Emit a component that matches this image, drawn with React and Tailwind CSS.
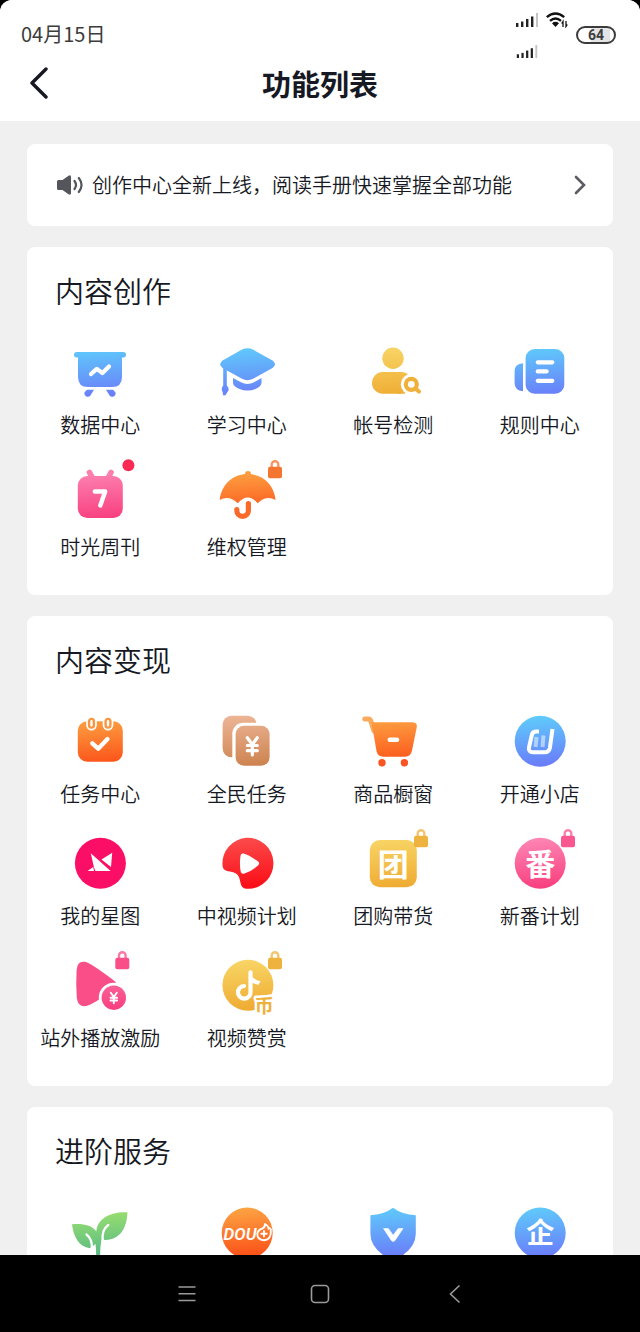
import React from "react";

const CJK = "font-['Noto_Sans_CJK_SC',sans-serif]";

const PALETTES = {
  blue: ["#5fcbfb", "#6a7cf9"],
  yellow: ["#f8d566", "#efab32"],
  pink: ["#fd86b4", "#f83f7f"],
  orange: ["#fda544", "#fb4f17"],
  tan: ["#ecb494", "#cd8350"],
  red: ["#fb4b4b", "#fb0d17"],
  green: ["#a0e36c", "#56b886"],
};

function Lock({ x = 60, fill }) {
  return (
    <g>
      <path
        d={`M${x - 3.3} 7 V2.5 a3.3 3.3 0 0 1 6.6 0 V7`}
        fill="none"
        stroke={fill}
        strokeWidth="2.4"
        opacity="0.75"
      />
      <rect x={x - 7} y="4.8" width="14" height="11.4" rx="2" fill={fill} />
    </g>
  );
}

function Glyph({ x, y, size, children, ...rest }) {
  return (
    <text
      x={x}
      y={y}
      fontSize={size}
      fontWeight="700"
      textAnchor="middle"
      fill="#fff"
      className={CJK}
      {...rest}
    >
      {children}
    </text>
  );
}

function Icon({ id, tone, children }) {
  const [from, to] = PALETTES[tone];
  return (
    <svg viewBox="0 0 64 64" className="block size-16 overflow-visible" aria-hidden="true">
      <defs>
        <linearGradient id={id} gradientUnits="userSpaceOnUse" x1="30" y1="7" x2="34" y2="57">
          <stop offset="0" stopColor={from} />
          <stop offset="1" stopColor={to} />
        </linearGradient>
      </defs>
      {children(`url(#${id})`)}
    </svg>
  );
}

const line = { fill: "none", strokeLinecap: "round", strokeLinejoin: "round" };

const DataIcon = () => (
  <Icon id="g-data" tone="blue">
    {(f) => (
      <>
        <rect x="6" y="12" width="52" height="5.4" rx="2.7" fill={f} />
        <path d="M10 13H54V37Q54 47 44 47H20Q10 47 10 37Z" fill={f} />
        <path d="M19 49.7H26L22.6 55.2Q20.8 57.6 18 56.2Q15.4 54.5 16.8 52Z" fill={f} />
        <path d="M45 49.7H38L41.4 55.2Q43.2 57.6 46 56.2Q48.6 54.5 47.2 52Z" fill={f} />
        <path d="M23 34L28.8 28.9L34.4 33L41 26.5" stroke="#fff" strokeWidth="4.2" {...line} />
      </>
    )}
  </Icon>
);

const StudyIcon = () => (
  <Icon id="g-study" tone="blue">
    {(f) => (
      <>
        <path d="M27 9.6Q32.5 7 38 9.6L57.5 20.5Q62.5 24.3 57.5 28L38 38.8Q32.5 41.5 27 38.8L7.5 28Q3 24.3 7.5 20.5Z" fill={f} />
        <path d="M18 38L26 42.3Q32.5 45.5 39 42.3L46.500 38V43Q46 46.5 41 48.7Q32.5 52.5 24 48.7Q18.5 46.5 18 43Z" fill={f} />
        <path d="M8.2 27H11.8V45.5Q15.2 49 12.500 52L11.5 53.5Q11 55.5 9 55.5Q7.5 55 7.8 52.5Q5.5 48.5 8.2 45.5Z" fill={f} />
      </>
    )}
  </Icon>
);

const AccountIcon = () => (
  <Icon id="g-account" tone="yellow">
    {(f) => (
      <>
        <circle cx="32" cy="18.3" r="10.7" fill={f} />
        <rect x="11" y="32" width="40" height="21.7" rx="10.8" fill={f} />
        <path d="M40 48H58V56H40Z" fill="#fff" />
        <path d="M36 44H44V53.7H36Z" fill={f} />
        <circle cx="50.3" cy="44.3" r="10.5" fill="#fff" />
        <circle cx="50.3" cy="44.3" r="5.5" fill="none" stroke="#f0b13b" strokeWidth="4.2" />
        <path d="M55 49L58 51.6" stroke="#f0b13b" strokeWidth="4" {...line} />
      </>
    )}
  </Icon>
);

const RulesIcon = () => (
  <Icon id="g-rules" tone="blue">
    {(f) => (
      <>
        <rect x="17.6" y="9" width="38.7" height="44.7" rx="9" fill={f} />
        <path d="M15 23.3V51.3Q6.6 50.5 6.6 43V31Q6.6 24 15 23.3Z" fill={f} />
        <path d="M29.8 22.3H44.3M29.8 31.4H38.6M29.8 40.8H44.3" stroke="#fff" strokeWidth="4.3" {...line} />
      </>
    )}
  </Icon>
);

const WeeklyIcon = () => (
  <Icon id="g-weekly" tone="pink">
    {(f) => (
      <>
        <path d="M21.5 10.5L24.5 16M43 10.500L40 16" stroke="#fc7fae" strokeWidth="5.6" {...line} />
        <rect x="9.8" y="14" width="45" height="42" rx="9.5" fill={f} />
        <path d="M26.8 29.5H37.200L32.3 43.5" stroke="#fff" strokeWidth="4.400" {...line} />
        <circle cx="60.4" cy="3.3" r="6" fill="#fa2a55" />
      </>
    )}
  </Icon>
);

const RightsIcon = () => (
  <Icon id="g-rights" tone="orange">
    {(f) => (
      <>
        <circle cx="33" cy="12" r="3" fill={f} />
        <path d="M4.700 38C6.5 22 18 12 32.700 12S59 22 60.600 38Q51.500 32.500 42.6 41.3Q32.7 29.5 22.8 41.3Q13.8 32.500 4.700 38Z" fill={f} />
        <path d="M33.4 40.500V48.500A5.800 5.800 0 0 1 21.800 48.500V47.500" stroke="#fff" strokeWidth="8.400" {...line} />
        <path d="M33.4 41.500V48.500A5.800 5.800 0 0 1 21.800 48.500V47.500" stroke="#f96a2b" strokeWidth="5.200" {...line} />
        <Lock fill="#f4752f" />
      </>
    )}
  </Icon>
);

const TaskIcon = () => (
  <Icon id="g-task" tone="orange">
    {(f) => (
      <>
        <rect x="9.8" y="12.3" width="45" height="40.4" rx="9.5" fill={f} />
        {[23.5, 40].map((x) => (
          <g key={x}>
            <rect x={x - 5.3} y="7" width="10.6" height="14.5" rx="5.3" fill="#fff" />
            <rect x={x - 2.4} y="9.900" width="4.800" height="8.700" rx="2.400" fill="#fff" stroke="#fb9540" strokeWidth="2.400" />
          </g>
        ))}
        <path d="M24.3 34.3L30.2 39.7L39.5 30" stroke="#fff" strokeWidth="4.3" {...line} />
      </>
    )}
  </Icon>
);

const PublicTaskIcon = () => (
  <Icon id="g-public" tone="tan">
    {(f) => (
      <>
        <rect x="7.6" y="6.7" width="34" height="41.6" rx="9" fill={f} />
        <rect x="17.3" y="13.7" width="40" height="46" rx="11" fill="#fff" />
        <rect x="20.6" y="16.7" width="34" height="40" rx="8.5" fill={f} />
        <path d="M32.3 28.8L37.3 35.5L42.3 28.8M37.3 35.5V46M32.3 36.5H42.3M32.3 41.7H42.3" stroke="#fff" strokeWidth="3.200" {...line} />
      </>
    )}
  </Icon>
);

const CartIcon = () => (
  <Icon id="g-cart" tone="orange">
    {(f) => (
      <>
        <path d="M3.800 10H7.500Q9.3 10 10 12.5L13 22" stroke="#fbab5e" strokeWidth="5" {...line} />
        <path d="M10.500 13.3H51.500Q56.500 13.6 55.800 18L51 41.5Q49.700 47.7 44 47.700H22.500Q17 47.700 15.600 42.5Z" fill={f} />
        <rect x="26.600" y="28.400" width="11.600" height="4.500" rx="2" fill="#fff" />
        <circle cx="21" cy="53.700" r="3.700" fill="#fb5423" />
        <circle cx="43.400" cy="53.700" r="3.700" fill="#fb5423" />
      </>
    )}
  </Icon>
);

const ShopIcon = () => (
  <Icon id="g-shop" tone="blue">
    {(f) => (
      <>
        <circle cx="32.2" cy="32.3" r="25.5" fill={f} />
        <path d="M28.5 28L27.600 38M35.500 26.500L34.500 38" stroke="#fff" strokeWidth="4" opacity="0.5" fill="none" />
        <path d="M31 22.500H28.300Q24.500 22.500 23.800 26L21 38.500Q20.200 43.200 25 43.200H36.500Q41 43.200 41.900 38.800L44.500 20" stroke="#fff" strokeWidth="4" fill="none" strokeLinejoin="round" />
      </>
    )}
  </Icon>
);

const StarIcon = () => (
  <Icon id="g-star" tone="pink">
    {() => (
      <>
        <circle cx="32.4" cy="32.3" r="25.5" fill="#fb0f66" />
        <path d="M22.8 22.3L42.6 40H27.4L26 36.500ZM44.2 21.700L43 36L33.500 28.600ZM25.200 36L19.600 40H26Z" fill="#fff" />
      </>
    )}
  </Icon>
);

const MidVideoIcon = () => (
  <Icon id="g-mid" tone="red">
    {(f) => (
      <>
        <path d="M7.5 34A25.5 25.5 0 1 1 34 57.8C28.5 58 26.3 56.5 25.3 51C24.3 45 22.5 42 17 41C11 40 7.5 39 7.5 34Z" fill={f} />
        <path d="M28 25Q33 26.5 41.500 32.400Q35 38.500 28.200 40.200Q26.800 33 28 25Z" fill="#fff" stroke="#fff" strokeWidth="5" strokeLinejoin="round" />
      </>
    )}
  </Icon>
);

const GroupBuyIcon = () => (
  <Icon id="g-group" tone="yellow">
    {(f) => (
      <>
        <rect x="8.8" y="9" width="47" height="47.3" rx="10" fill={f} />
        <Glyph x="32.3" y="44.5" size="31">团</Glyph>
        <Lock fill="#eeb33f" />
      </>
    )}
  </Icon>
);

const NewShowIcon = () => (
  <Icon id="g-new" tone="pink">
    {(f) => (
      <>
        <circle cx="32.2" cy="32.3" r="25.5" fill={f} />
        <Glyph x="32.2" y="44" size="30">番</Glyph>
        <Lock fill="#fa5790" />
      </>
    )}
  </Icon>
);

const OffsiteIcon = () => (
  <Icon id="g-offsite" tone="pink">
    {(f) => (
      <>
        <path d="M8.6 17Q9.3 7.5 17 8.8Q22 9.5 46.5 28Q50 31 46 35Q26 52 16.5 53.3Q10 53.5 8.8 45Q7.8 31 8.6 17Z" fill="#f94e87" />
        <circle cx="45.8" cy="44.7" r="15" fill="#fff" />
        <circle cx="45.8" cy="44.7" r="12.2" fill={f} />
        <path d="M42.800 39.800L45.8 44L48.800 39.800M45.8 44V50.300M42.500 44.700H49.100M42.500 47.500H49.100" stroke="#fff" strokeWidth="1.900" {...line} />
        <Lock x={54.3} fill="#f94e87" />
      </>
    )}
  </Icon>
);

const RewardIcon = () => (
  <Icon id="g-reward" tone="yellow">
    {(f) => (
      <>
        <circle cx="32.9" cy="32.3" r="25.5" fill={f} />
        <path d="M35.5 19.3V38.500A6.300 6.300 0 1 1 29 33" stroke="#fff" strokeWidth="4.200" fill="none" strokeLinecap="round" />
        <path d="M34 19.500Q37.500 26.500 45.500 28.300L43.500 31.800Q38 31 35 28Z" fill="#fff" />
        <Glyph x="49.2" y="60" size="19" fill="#edb13c" stroke="#fff" strokeWidth="5" strokeLinejoin="round" paintOrder="stroke">币</Glyph>
        <Lock fill="#eeb33f" />
      </>
    )}
  </Icon>
);

const SproutIcon = () => (
  <Icon id="g-sprout" tone="green">
    {(f) => (
      <>
        <path d="M59.400 12.300C43 11.500 29.500 18 28.300 31.500C24 25 15 23.500 4 24.300C5.500 37 11 47 22 48.300L27.500 44Q28.500 52 28 62H32.300Q31.600 48 33.500 39.500L37.500 40C53 39.500 59 27 59.400 12.300Z" fill={f} />
        <path d="M40.300 25C35.500 28.500 33.800 34 34.800 41M18.500 34.500C22.500 37.500 24.500 42 23.800 49.500" stroke="#fff" strokeWidth="2.300" {...line} />
      </>
    )}
  </Icon>
);

const DouIcon = () => (
  <Icon id="g-dou" tone="orange">
    {(f) => (
      <>
        <circle cx="32.2" cy="33" r="25.5" fill={f} />
        <text x="25" y="39.5" fontSize="17" fontWeight="600" fontStyle="italic" textAnchor="middle" fill="#fff" className="font-['Roboto',sans-serif]">DOU</text>
        <path d="M50 24Q54 26.5 53.5 28.800Q55.500 27.500 55.800 29.5Q56.800 39.700 49 40.200Q42 39.700 42.3 33.5Q43.500 29.5 47.5 28.5Q50 27.500 50 24Z" stroke="#fff" strokeWidth="1.9" {...line} />
        <path d="M49 31V36.400M46.300 33.700H51.700" stroke="#fff" strokeWidth="1.900" {...line} />
      </>
    )}
  </Icon>
);

const ShieldIcon = () => (
  <Icon id="g-shield" tone="blue">
    {(f) => (
      <>
        <path d="M32 7.7Q41 14.5 54.8 15.3V34Q54.5 50 32 61Q9.7 50 9.4 34V15.3Q23 14.5 32 7.7Z" fill={f} />
        <path d="M22.5 28.5H27.3L32.2 35.200L37.200 28.500H42L34 40.5Q32.2 42.5 30.4 40.5Z" fill="#fff" stroke="#fff" strokeWidth="0.6" strokeLinejoin="round" />
      </>
    )}
  </Icon>
);

const CompanyIcon = () => (
  <Icon id="g-company" tone="blue">
    {(f) => (
      <>
        <circle cx="32.2" cy="33" r="25.5" fill={f} />
        <Glyph x="32.2" y="43" size="28">企</Glyph>
      </>
    )}
  </Icon>
);

const SECTIONS = [
  {
    title: "内容创作",
    items: [
      { label: "数据中心", icon: DataIcon },
      { label: "学习中心", icon: StudyIcon },
      { label: "帐号检测", icon: AccountIcon },
      { label: "规则中心", icon: RulesIcon },
      { label: "时光周刊", icon: WeeklyIcon },
      { label: "维权管理", icon: RightsIcon },
    ],
  },
  {
    title: "内容变现",
    items: [
      { label: "任务中心", icon: TaskIcon },
      { label: "全民任务", icon: PublicTaskIcon },
      { label: "商品橱窗", icon: CartIcon },
      { label: "开通小店", icon: ShopIcon },
      { label: "我的星图", icon: StarIcon },
      { label: "中视频计划", icon: MidVideoIcon },
      { label: "团购带货", icon: GroupBuyIcon },
      { label: "新番计划", icon: NewShowIcon },
      { label: "站外播放激励", icon: OffsiteIcon },
      { label: "视频赞赏", icon: RewardIcon },
    ],
  },
  {
    title: "进阶服务",
    items: [
      { name: "成长", icon: SproutIcon },
      { name: "DOU+", icon: DouIcon },
      { name: "认证", icon: ShieldIcon },
      { name: "企业", icon: CompanyIcon },
    ],
  },
];

function Signal({ className }) {
  return (
    <svg viewBox="0 0 22 14" className={className} fill="#222" aria-hidden="true">
      <rect x="0" y="10" width="2.4" height="4" />
      <rect x="5" y="8.5" width="2.4" height="5.5" />
      <rect x="10" y="6" width="2.4" height="8" />
      <rect x="15" y="3.5" width="2.4" height="10.5" />
      <rect x="20" y="0" width="2" height="14" fill="#c4c4c4" />
    </svg>
  );
}

function StatusBar() {
  return (
    <div className="flex h-[60px] items-start justify-between pl-[21px] pr-6 text-[#3c3c3c]">
      <time className="pt-5 text-xl leading-7">04月15日</time>
      <div className="flex gap-2 pt-3">
        <div className="flex flex-col gap-[18px] pt-[1px]">
          <Signal className="h-[14px] w-[22px]" />
          <Signal className="h-[13px] w-[22px]" />
        </div>
        <svg viewBox="0 0 22 16" className="h-4 w-[22px]" fill="none" stroke="#111" strokeWidth="2.4" aria-hidden="true">
          <path d="M.8 5.2Q9.5-2.2 18.2 5.2" />
          <path d="M4 8.800Q9.5 4.2 15 8.8" />
          <path d="M6 11.2Q9.5 8.5 13 11.2L9.5 15Z" fill="#111" stroke="none" />
          <path d="M17 15V9.5L15.7 11.5M20 9V14.5L21.3 12.5" strokeWidth="1.3" />
        </svg>
        <div className="mt-[14px] flex h-[18px] w-10 items-center justify-center rounded-full border-2 border-[#3c3c3c] bg-[linear-gradient(90deg,#fff_35%,#e4e4e4_35%,#e4e4e4_90%,#fff_90%)] font-['Roboto',sans-serif] text-sm font-bold leading-none">
          64
        </div>
      </div>
    </div>
  );
}

function Tile({ item }) {
  const Art = item.icon;
  return (
    <li>
      <button
        type="button"
        aria-label={item.name}
        className="flex w-full flex-col items-center gap-[7px] whitespace-nowrap text-xl font-[350] leading-7"
      >
        <Art />
        {item.label && <span>{item.label}</span>}
      </button>
    </li>
  );
}

function Section({ section }) {
  return (
    <section className="rounded-lg bg-white pb-[34px] pt-[23px]">
      <h2 className="px-7 text-[29px] font-[350] leading-10">{section.title}</h2>
      <ul className="mt-[30px] grid grid-cols-4 gap-y-[23px]">
        {section.items.map((item) => (
          <Tile key={item.label || item.name} item={item} />
        ))}
      </ul>
    </section>
  );
}

export default function App() {
  return (
    <div lang="zh-CN" className="flex h-screen flex-col bg-black font-['Noto_Sans_CJK_SC',sans-serif] text-[#161823]">
      <div className="flex min-h-0 flex-1 flex-col overflow-hidden rounded-t-xl bg-[#f0f0f0]">
        <header className="bg-white pb-4">
          <StatusBar />
          <div className="grid h-[45px] grid-cols-[1fr_auto_1fr] items-center px-[30px]">
            <button type="button" aria-label="返回" className="justify-self-start">
              <svg viewBox="0 0 18 32" className="h-8 w-[18px]" fill="none" stroke="#161823" strokeWidth="3.4" strokeLinecap="round" strokeLinejoin="round">
                <path d="M16 2L2 16L16 30" />
              </svg>
            </button>
            <h1 className="text-[29px] font-bold leading-10">功能列表</h1>
          </div>
        </header>

        <main className="flex min-h-0 flex-1 flex-col gap-[21px] overflow-y-auto px-[27px] pt-[23px] [scrollbar-width:none] *:shrink-0">
          <a href="#guide" className="flex h-[82px] items-center rounded-lg bg-white pl-[30px] pr-[27px] text-xl font-[350]">
            <svg viewBox="0 0 26 20" className="mr-[9px] h-5 w-[26px] shrink-0" aria-hidden="true">
              <path d="M1.5 5H5.5L11.500 .8Q14 -.5 14 2V18Q14 20.500 11.500 19.200L5.5 15H1.5Q0 15 0 13.500V6.500Q0 5 1.5 5Z" fill="#55565c" />
              <path d="M17.500 6Q20.500 10 17.500 14M21.8 3Q27.300 10 21.800 17" fill="none" stroke="#55565c" strokeWidth="2.2" strokeLinecap="round" />
            </svg>
            <span className="flex-1">创作中心全新上线，阅读手册快速掌握全部功能</span>
            <svg viewBox="0 0 12 20" className="h-5 w-3 shrink-0" fill="none" stroke="#5b5c63" strokeWidth="2.6" strokeLinecap="round" aria-hidden="true">
              <path d="M2 2L10 10L2 18" />
            </svg>
          </a>
          {SECTIONS.map((section) => (
            <Section key={section.title} section={section} />
          ))}
        </main>
      </div>

      <nav className="flex h-[77px] shrink-0 items-center justify-center gap-[85px] text-[#9a9a9a]">
        <button type="button" aria-label="菜单" className="flex size-12 items-center justify-center">
          <svg viewBox="0 0 20 20" className="size-5" stroke="currentColor" strokeWidth="1.6" fill="none">
            <path d="M1.5 3H18.5M1.5 9.800H18.5M1.5 16.5H18.5" />
          </svg>
        </button>
        <button type="button" aria-label="主屏幕" className="flex size-12 items-center justify-center">
          <svg viewBox="0 0 20 20" className="size-5" stroke="currentColor" strokeWidth="1.6" fill="none">
            <rect x="1.5" y="1.5" width="17" height="17" rx="3.5" />
          </svg>
        </button>
        <button type="button" aria-label="后退" className="flex size-12 items-center justify-center">
          <svg viewBox="0 0 20 20" className="size-5" stroke="currentColor" strokeWidth="1.6" fill="none">
            <path d="M16.500 1.5L7.500 10L16.500 18.5" />
          </svg>
        </button>
      </nav>
    </div>
  );
}
